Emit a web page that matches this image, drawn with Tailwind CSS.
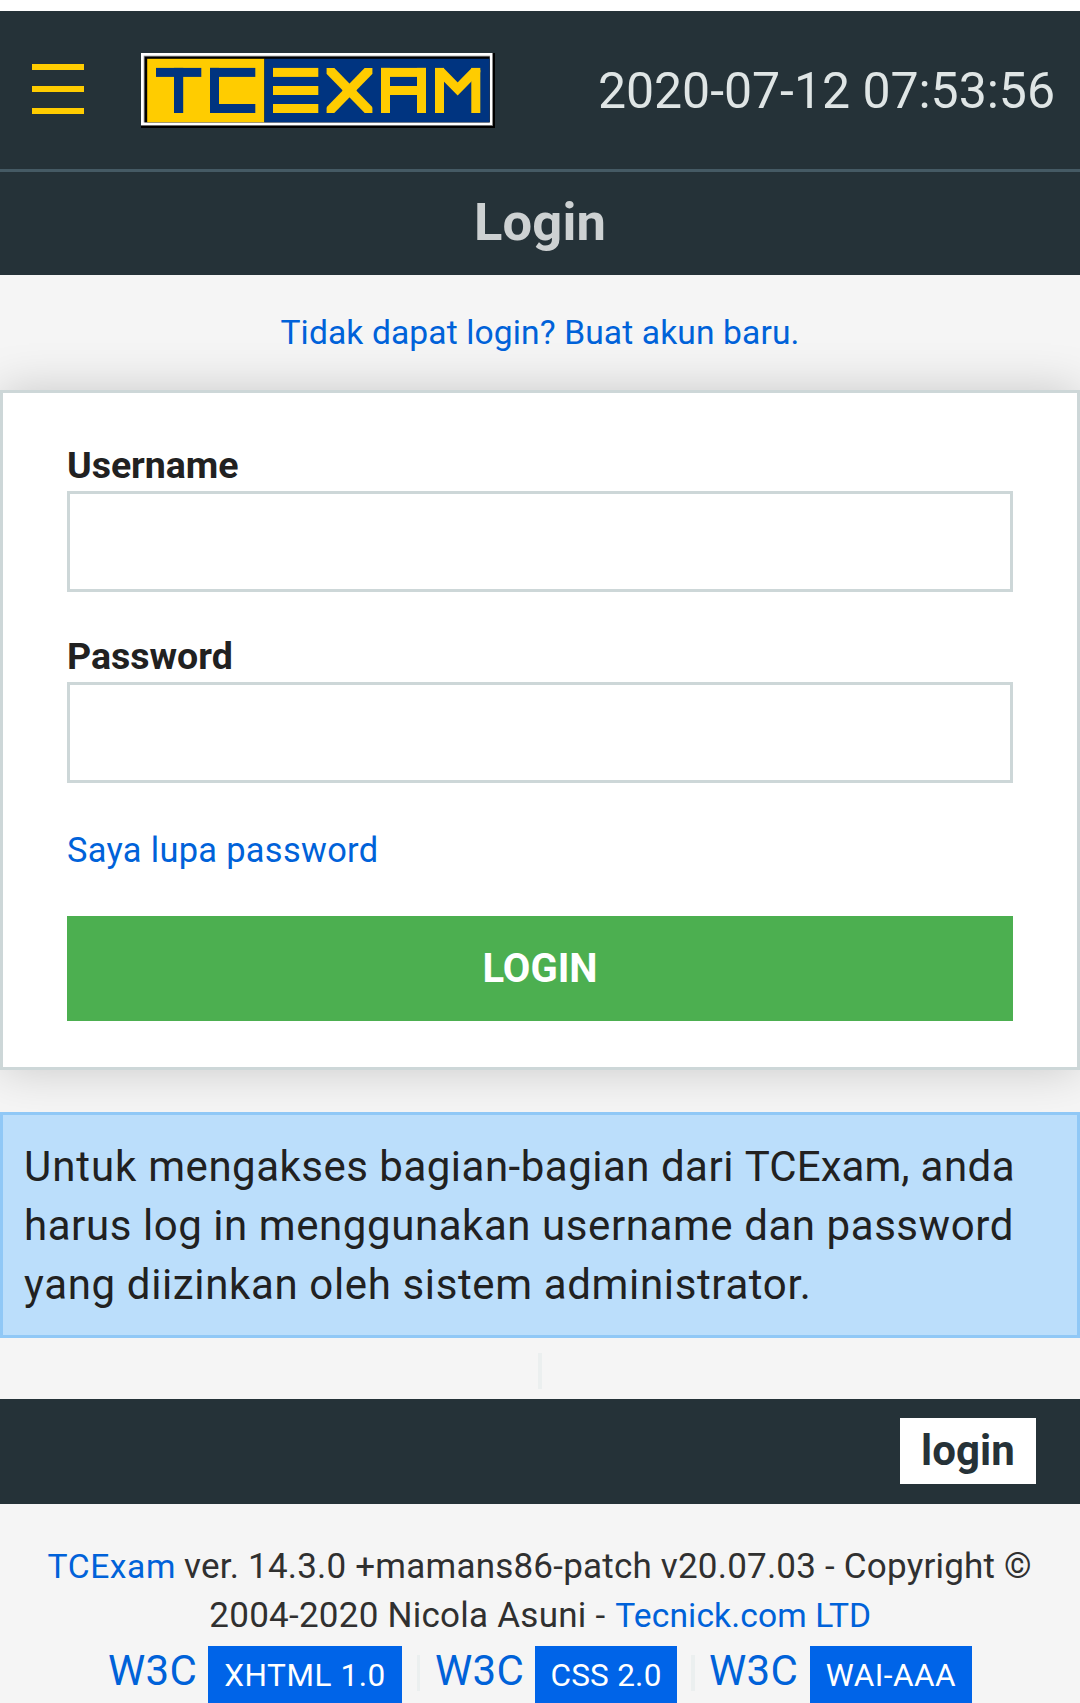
<!DOCTYPE html>
<html lang="id">
<head>
<meta charset="utf-8">
<meta name="viewport" content="width=device-width, initial-scale=1">
<title>TCExam - Login</title>
<script src="https://cdn.jsdelivr.net/npm/@tailwindcss/browser@4"></script>
</head>
<body class="h-[1703px] overflow-hidden bg-[#f5f5f5] pt-[11px] font-['Roboto',sans-serif] text-[#212121] [background-image:linear-gradient(#fff_11px,transparent_11px)]">

<header class="bg-[#253238]">
  <div class="flex h-[161px] items-center border-b-[3px] border-[#455a64] pr-[25px] pl-[32px]">
    <button type="button" aria-label="Menu" class="flex w-[52px] flex-col gap-[16px] pb-[2px]">
      <span class="h-[6px] w-full bg-[#ffcc00]"></span>
      <span class="h-[6px] w-full bg-[#ffcc00]"></span>
      <span class="h-[6px] w-full bg-[#ffcc00]"></span>
    </button>
    <svg class="ml-[57px] h-[75px] w-[354px] shrink-0" viewBox="0 0 354 75" role="img" aria-label="TCExam">
      <rect width="354" height="75" fill="#000"/>
      <rect width="352" height="72.8" fill="#8a8a8a"/>
      <rect width="351" height="72" fill="#fff"/>
      <rect x="2.7" y="2.7" width="346.3" height="66.8" fill="#8f8f8f"/>
      <rect x="3.6" y="3.6" width="345" height="65.7" fill="#000"/>
      <rect x="6.2" y="5.8" width="117.2" height="63.4" fill="#ffcc00"/>
      <rect x="123.4" y="5.8" width="225.2" height="63.4" fill="#003480"/>
      <g fill="#003480">
        <rect x="15" y="14.9" width="45.3" height="9"/>
        <rect x="33" y="14.9" width="9.2" height="45.1"/>
        <rect x="69" y="14.9" width="45.3" height="9"/>
        <rect x="69" y="14.9" width="9" height="45.1"/>
        <rect x="69" y="51" width="45.3" height="9"/>
      </g>
      <g fill="#ffcc00">
        <rect x="132" y="14.9" width="45.3" height="9"/>
        <rect x="132" y="33" width="45.3" height="9"/>
        <rect x="132" y="51" width="45.3" height="9"/>
        <rect x="240" y="14.9" width="45" height="9"/>
        <rect x="240" y="14.9" width="9" height="45.1"/>
        <rect x="276" y="14.9" width="9" height="45.1"/>
        <rect x="240" y="33" width="45" height="9"/>
        <rect x="294" y="14.9" width="9" height="45.1"/>
        <rect x="330.3" y="14.9" width="9" height="45.1"/>
      </g>
      <svg x="185.6" y="14.9" width="45.8" height="45.1" viewBox="0 0 45.8 45.1">
        <g stroke="#ffcc00" stroke-width="9.6">
          <line x1="0" y1="-1" x2="45.8" y2="46.1"/>
          <line x1="45.8" y1="-1" x2="0" y2="46.1"/>
          <line x1="16" y1="22.5" x2="29.8" y2="22.5"/>
        </g>
      </svg>
      <svg x="294" y="14.9" width="45.3" height="30" viewBox="0 0 45.3 30">
        <polyline points="2,0 22.65,21 43.3,0" fill="none" stroke="#ffcc00" stroke-width="9.2"/>
      </svg>
    </svg>
    <time class="ml-auto pt-[2px] text-[50px] leading-[60px] tracking-[-0.03px] whitespace-nowrap text-[#dfe5e5]">2020-07-12 07:53:56</time>
  </div>
  <h1 class="h-[103px] text-center text-[52.5px] leading-[100px] font-bold tracking-[0.1px] text-[#cdd1d2]">Login</h1>
</header>

<main>
  <p class="h-[115px] text-center text-[33.6px] leading-[115px] tracking-[0.12px]"><a class="text-[#0062d9]">Tidak dapat login? Buat akun baru.</a></p>

  <form class="h-[680px] border-[3px] border-[#cdd7d8] bg-white px-[64px] pt-[46px] shadow-[0_0_45px_rgba(0,0,0,0.18)]">
    <label for="user" class="block text-[37.5px] leading-[52px] font-bold tracking-[-0.05px]">Username</label>
    <input id="user" type="text" class="block h-[101px] w-full border-[3px] border-[#cdd7d8] bg-white">
    <label for="pass" class="mt-[38px] block text-[37.5px] leading-[52px] font-bold tracking-[0px]">Password</label>
    <input id="pass" type="password" class="block h-[101px] w-full border-[3px] border-[#cdd7d8] bg-white">
    <a class="block h-[133px] text-[34.4px] leading-[135px] tracking-[0.32px] text-[#0062d9]">Saya lupa password</a>
    <button type="button" class="block h-[105px] w-full bg-[#4caf50] text-[40px] leading-[105px] font-bold text-white">LOGIN</button>
  </form>

  <div class="mt-[42px] h-[226px] border-[3px] border-[#90c8f6] bg-[#bbdefb] pt-[22px] pl-[21px] text-[42px] leading-[59px] whitespace-nowrap">
    <span class="block tracking-[0.5px]"><span class="tracking-[0.95px]">Untuk</span> mengakses bagian-bagian dari <span class="tracking-[0.05px]">TCExam,</span> anda</span>
    <span class="block tracking-[0.57px]">harus log in menggunakan username dan password</span>
    <span class="block tracking-[0.64px]">yang diizinkan oleh sistem administrator.</span>
  </div>
</main>

<div class="flex h-[61px] justify-center pt-[15px]"><span class="h-[36px] w-[4px] bg-[#ebefef]"></span></div>

<nav class="flex h-[105px] justify-end bg-[#253238] pt-[19px] pr-[44px]">
  <a class="h-[66px] w-[136px] bg-white text-center text-[42px] leading-[66px] font-bold tracking-[0.1px] text-[#263238]">login</a>
</nav>

<footer class="pt-[38px] whitespace-nowrap">
  <div class="flex items-baseline pl-[47.5px] text-[35px] leading-[49px] tracking-[0.21px] text-[#303030]">
    <a class="w-[136.5px] text-[33.6px] tracking-[0.6px] text-[#0062d9]">TCExam</a>
    <span>ver. 14.3.0 +mamans86-patch v20.07.03 - Copyright ©</span>
  </div>
  <div class="flex items-baseline pl-[209.3px] text-[35px] leading-[49px] tracking-[0.25px] text-[#303030]">
    <span class="w-[406px]">2004-2020 Nicola Asuni -</span>
    <a class="text-[33.6px] tracking-[0.12px] text-[#0062d9]">Tecnick.com LTD</a>
  </div>
  <div class="mt-[6px] flex h-[57px] items-start pl-[108px] text-[42px] leading-[49px] text-[#0062d9]">
    <a class="w-[100px] tracking-[0.3px]">W3C</a>
    <a class="h-[57px] w-[194px] bg-[#0064e8] text-center text-[31.5px] leading-[60px] tracking-[0.55px] text-white">XHTML 1.0</a>
    <span class="mt-[9px] ml-[15px] h-[36px] w-[3px] bg-[#ebefef]"></span>
    <a class="ml-[15px] w-[100px] tracking-[0.3px]">W3C</a>
    <a class="h-[57px] w-[142px] bg-[#0064e8] text-center text-[31.5px] leading-[60px] tracking-[0.25px] text-white">CSS 2.0</a>
    <span class="mt-[9px] ml-[14px] h-[36px] w-[4px] bg-[#ebefef]"></span>
    <a class="ml-[14px] w-[101px] tracking-[0.3px]">W3C</a>
    <a class="h-[57px] w-[162px] bg-[#0064e8] text-center text-[31.5px] leading-[60px] tracking-[0.5px] text-white">WAI-AAA</a>
  </div>
</footer>
</body>
</html>
